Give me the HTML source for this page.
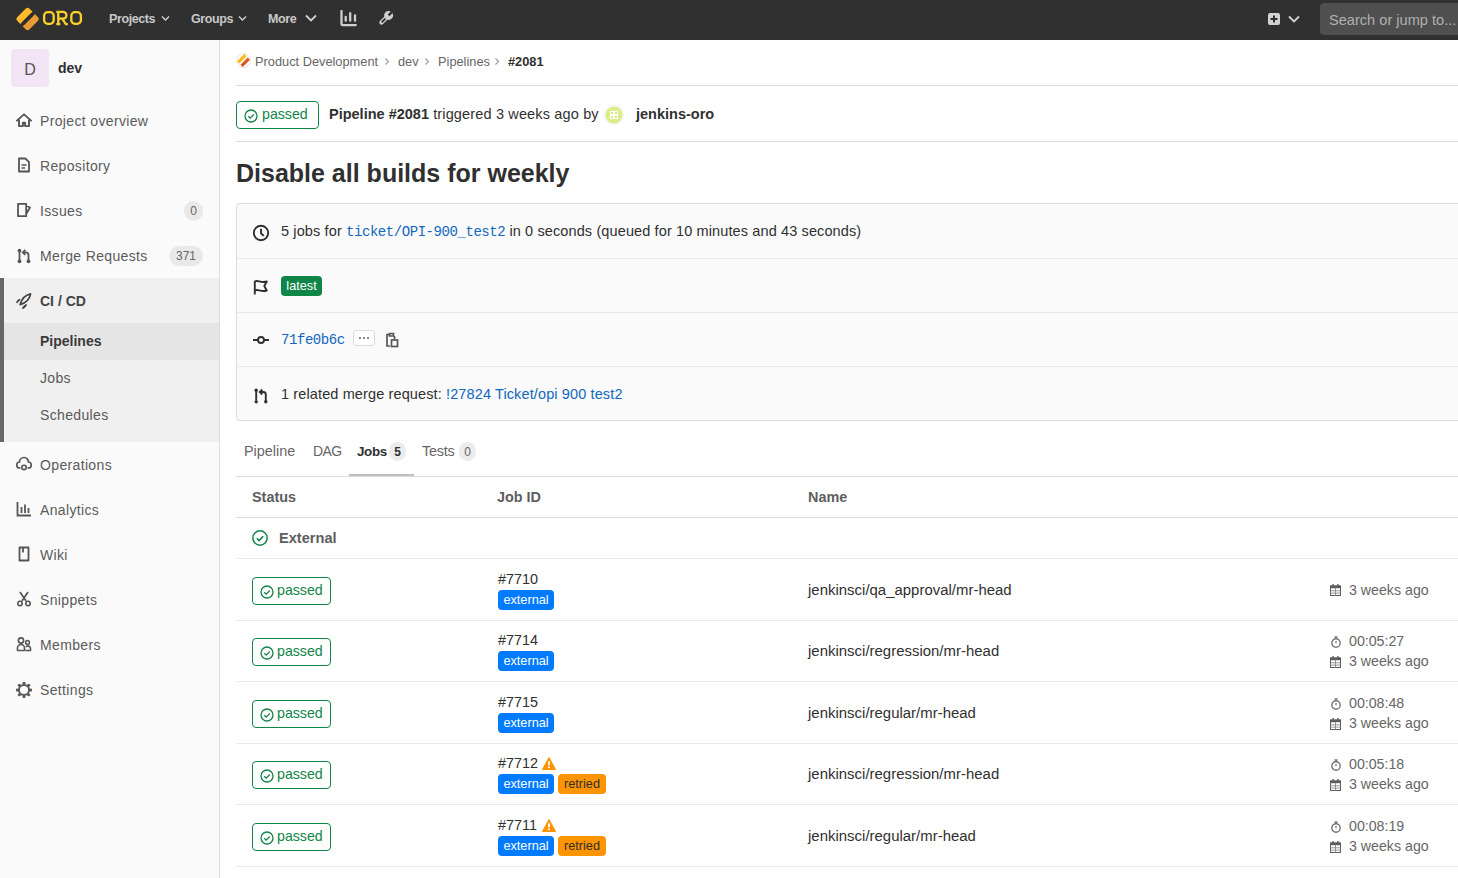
<!DOCTYPE html>
<html><head><meta charset="utf-8">
<style>
*{box-sizing:border-box;margin:0;padding:0}
html,body{width:1458px;height:878px;overflow:hidden;background:#fff;font-family:"Liberation Sans",sans-serif;color:#303030}
.a{position:absolute;white-space:nowrap}
#hdr{position:absolute;left:0;top:0;width:1458px;height:40px;background:#303030}
.nav{position:absolute;top:10px;font-size:12.5px;letter-spacing:-0.4px;font-weight:bold;color:#c8c8c8;line-height:18px}
#side{position:absolute;left:0;top:40px;width:220px;height:838px;background:#fafafa;border-right:1px solid #dcdcdc}
.si{position:absolute;left:0;width:219px;height:45px}
.si .t{position:absolute;left:40px;top:14px;font-size:14px;letter-spacing:0.35px;line-height:19px;color:#5a5a5a}
.si svg{position:absolute;left:16px;top:14px}
.cnt{position:absolute;right:16px;top:13px;height:20px;border-radius:10px;background:#e9e9e9;color:#666;font-size:12px;line-height:20px;text-align:center;padding:0 7px}

.bc{position:absolute;top:53px;font-size:12.8px;line-height:18px;color:#666}
.hl{position:absolute;left:236px;width:1222px;height:1px;background:#dbdbdb}
.ci{position:absolute;border:1px solid #108548;border-radius:4px;color:#108548}
.ci svg{position:absolute}
.ci span{position:absolute;font-size:14.2px;line-height:18px}
.ir{position:absolute;left:281px;font-size:14.5px;letter-spacing:0.12px;line-height:19px;color:#303030}
.mono{font-family:"Liberation Mono",monospace;font-size:14px;letter-spacing:-0.44px;color:#1068bf}
.lnk{color:#1068bf}
.bdg{position:absolute;height:20px;border-radius:4px;font-size:12.7px;line-height:20px;text-align:center}
.th{position:absolute;top:488px;font-size:14.4px;font-weight:bold;color:#5e5e5e;line-height:19px}
.rl{position:absolute;left:236px;width:1222px;height:1px;background:#e9e9e9}
.jid{position:absolute;left:498px;font-size:14.4px;line-height:19px;color:#303030}
.jn{position:absolute;left:808px;font-size:14.9px;letter-spacing:0.03px;line-height:19px;color:#303030}
.tm{position:absolute;left:1349px;font-size:14.2px;line-height:19px;color:#666}
#main{position:absolute;left:220px;top:40px;width:1238px;height:838px}
</style></head><body>
<div id="hdr">
  <!-- logo -->
  <svg class="a" style="left:14px;top:5px" width="28" height="28" viewBox="0 0 28 28">
    <g transform="rotate(-45 13.6 14)">
      <clipPath id="lc"><rect x="5" y="5.4" width="17.2" height="17.2" rx="2.8"/></clipPath>
      <g clip-path="url(#lc)">
        <rect x="0" y="0" width="28" height="12.4" fill="#fbbb2b"/>
        <rect x="0" y="15.7" width="28" height="13" fill="#e89a33"/>
      </g>
      <rect x="5.6" y="12.3" width="16" height="3.5" rx="1.7" fill="#2d2d2d"/>
    </g>
  </svg>
  <svg class="a" style="left:42px;top:10px" width="42" height="16" viewBox="0 0 42 16">
    <rect x="2.1" y="2.2" width="9.6" height="11.6" rx="3.6" stroke="#fcd02a" stroke-width="2.3" fill="none"/>
    <path d="M14.3 1.9h6.2c2.6 0 3.9 1.4 3.9 3.4s-1.3 3.4-3.9 3.4h-4.5M16.3 1.9v12.2M14.3 14.1h4M20.2 8.7l3.6 5.4h2" stroke="#fcd02a" stroke-width="2.3" fill="none"/>
    <rect x="29.3" y="2.2" width="9.6" height="11.6" rx="3.6" stroke="#fcd02a" stroke-width="2.3" fill="none"/>
  </svg>
  <div class="nav" style="left:109px">Projects</div>
  <svg class="a" style="left:161px;top:15px" width="9" height="7" viewBox="0 0 9 7"><path d="M1 1.5l3.5 3.5 3.5-3.5" stroke="#d2d2d2" stroke-width="1.4" fill="none"/></svg>
  <div class="nav" style="left:191px">Groups</div>
  <svg class="a" style="left:238px;top:15px" width="9" height="7" viewBox="0 0 9 7"><path d="M1 1.5l3.5 3.5 3.5-3.5" stroke="#d2d2d2" stroke-width="1.4" fill="none"/></svg>
  <div class="nav" style="left:268px">More</div>
  <svg class="a" style="left:305px;top:14px" width="12" height="9" viewBox="0 0 12 9"><path d="M1 1.5l5 5 5-5" stroke="#d2d2d2" stroke-width="1.8" fill="none"/></svg>
  <svg class="a" style="left:340px;top:10px" width="17" height="17" viewBox="0 0 17 17"><path d="M1.5 1V14c0 .8.4 1.1 1.1 1.1H15.8" stroke="#cfcfcf" stroke-width="2.3" fill="none" stroke-linecap="round"/><path d="M5.7 6.8v3.9M10.2 3.2v7.5M15 5.4v5.3" stroke="#cfcfcf" stroke-width="2.3" stroke-linecap="round"/></svg>
  <svg class="a" style="left:378px;top:10px" width="16" height="16" viewBox="0 0 16 16"><defs><mask id="wm" maskUnits="userSpaceOnUse" x="-8" y="-8" width="32" height="32"><rect x="-8" y="-8" width="32" height="32" fill="#fff"/><rect x="6.75" y="-2" width="2.5" height="6.4" fill="#000"/><rect x="7.1" y="8.6" width="1.8" height="5.6" rx="0.9" fill="#000"/></mask></defs><g transform="rotate(45 8 8)"><g mask="url(#wm)" fill="#cfcfcf"><circle cx="8" cy="4.3" r="4.5"/><rect x="5.8" y="5" width="4.4" height="11.6" rx="2.2"/></g></g></svg>
  <svg class="a" style="left:1268px;top:13px" width="12" height="12" viewBox="0 0 12 12"><rect x="0" y="0" width="12" height="12" rx="2" fill="#d2d2d2"/><path d="M6 2.5v7M2.5 6h7" stroke="#303030" stroke-width="2"/></svg>
  <svg class="a" style="left:1288px;top:15px" width="12" height="8" viewBox="0 0 12 8"><path d="M1 1.5l5 5 5-5" stroke="#d2d2d2" stroke-width="1.8" fill="none"/></svg>
  <div class="a" style="left:1320px;top:3px;width:160px;height:32px;border-radius:4px;background:#4f4f4f"></div>
  <div class="a" style="left:1329px;top:11px;font-size:14.6px;line-height:19px;color:#b0b0b0">Search or jump to...</div>
</div>

<div id="side">
  <div class="a" style="left:11px;top:9px;width:38px;height:38px;border-radius:4px;background:#f3e5f5;color:#555;font-size:16px;line-height:42px;text-align:center">D</div>
  <div class="a" style="left:58px;top:19px;font-size:14px;font-weight:bold;color:#303030;line-height:19px">dev</div>

  <div class="si" style="top:58px"><svg width="16" height="16" viewBox="0 0 16 16"><path d="M0.9 8.6L8 2.4l7.1 6.2" stroke="#555" stroke-width="1.9" fill="none" stroke-linejoin="round" stroke-linecap="round"/><path d="M3 7.6V14.1h3.9v-3.4h2.2v3.4H13V7.6" stroke="#555" stroke-width="1.9" fill="none" stroke-linejoin="round"/></svg><span class="t">Project overview</span></div>
  <div class="si" style="top:103px"><svg width="16" height="16" viewBox="0 0 16 16"><path d="M3 1.5h6.5l3.5 3.6V14.5H3z" stroke="#555" stroke-width="1.8" fill="none" stroke-linejoin="round"/><path d="M5.5 8h5M5.5 11h3.5" stroke="#555" stroke-width="1.6"/></svg><span class="t">Repository</span></div>
  <div class="si" style="top:148px"><svg width="16" height="16" viewBox="0 0 16 16"><path d="M2 1.8h8.2v12.4H2zM10.2 3.5l3.8 2-3.8 6.5" stroke="#555" stroke-width="1.8" fill="none" stroke-linejoin="round"/></svg><span class="t">Issues</span><span class="cnt" style="right:16px;padding:0 6px">0</span></div>
  <div class="si" style="top:193px"><svg width="16" height="16" viewBox="0 0 16 16" style="top:15px"><path d="M3.5 3v9.5M12.5 13V7c0-1.6-1-2.6-2.6-2.6H7.6" stroke="#555" stroke-width="1.8" fill="none"/><path d="M9.3 1.8L6.8 4.4l2.5 2.5" stroke="#555" stroke-width="1.8" fill="none"/><circle cx="3.5" cy="2.6" r="1.9" fill="#555"/><circle cx="3.5" cy="13.3" r="1.9" fill="#555"/><circle cx="12.5" cy="13.3" r="1.9" fill="#555"/></svg><span class="t">Merge Requests</span><span class="cnt" style="right:16px">371</span></div>
  <div class="a" style="left:0;top:238px;width:219px;height:164px;background:#f0f0f0;border-left:4px solid #666"></div>
  <div class="a" style="left:4px;top:283px;width:215px;height:37px;background:#e5e5e5"></div>
  <div class="si" style="top:238px"><svg width="16" height="16" viewBox="0 0 16 16" style="top:15px"><path d="M4.1 11.6C5.4 6.8 8.6 2.2 14.6 0.9 13.6 6.6 9.4 10.2 4.1 11.6z" stroke="#444" stroke-width="1.7" fill="none" stroke-linejoin="round"/><path d="M0.6 9.8C0.9 8.1 1.9 6.7 3.9 6.1 3.5 7.8 2.5 9.2 0.6 9.8z" fill="#444" stroke="#444" stroke-width="0.9" stroke-linejoin="round"/><path d="M6.4 15.6C6.8 13.6 8.2 12.2 10.6 11.5 10.1 13.6 8.7 15.1 6.4 15.6z" fill="#444" stroke="#444" stroke-width="0.9" stroke-linejoin="round"/></svg><span class="t" style="font-weight:bold;color:#444;letter-spacing:0">CI / CD</span></div>
  <div class="a" style="left:40px;top:292px;font-size:14px;font-weight:bold;color:#3a3a3a;line-height:19px">Pipelines</div>
  <div class="a" style="left:40px;top:329px;font-size:14px;letter-spacing:0.35px;color:#5a5a5a;line-height:19px">Jobs</div>
  <div class="a" style="left:40px;top:366px;font-size:14px;letter-spacing:0.35px;color:#5a5a5a;line-height:19px">Schedules</div>
  <div class="si" style="top:402px"><svg width="16" height="16" viewBox="0 0 16 16"><path d="M4.5 12H4a3 3 0 0 1-.5-6 4.5 4.5 0 0 1 9 0 3 3 0 0 1-.5 6h-.5" stroke="#555" stroke-width="1.7" fill="none"/><circle cx="8" cy="11.5" r="2.2" stroke="#555" stroke-width="1.6" fill="none"/></svg><span class="t">Operations</span></div>
  <div class="si" style="top:447px"><svg width="16" height="16" viewBox="0 0 16 16"><path d="M1.5 1v13.5H15" stroke="#555" stroke-width="1.8" fill="none"/><path d="M5.5 6v6M9 3.5V12M12.5 7v5" stroke="#555" stroke-width="1.8"/></svg><span class="t">Analytics</span></div>
  <div class="si" style="top:492px"><svg width="16" height="16" viewBox="0 0 16 16"><path d="M3.5 1.5h9v13h-9zM7 1.5v5" stroke="#555" stroke-width="1.8" fill="none" stroke-linejoin="round"/></svg><span class="t">Wiki</span></div>
  <div class="si" style="top:537px"><svg width="16" height="16" viewBox="0 0 16 16"><path d="M4 1l6 9M12 1L6 10" stroke="#555" stroke-width="1.7" fill="none"/><circle cx="4" cy="12.5" r="2.2" stroke="#555" stroke-width="1.6" fill="none"/><circle cx="12" cy="12.5" r="2.2" stroke="#555" stroke-width="1.6" fill="none"/></svg><span class="t">Snippets</span></div>
  <div class="si" style="top:582px"><svg width="16" height="16" viewBox="0 0 16 16"><circle cx="5" cy="4.5" r="2.6" stroke="#555" stroke-width="1.6" fill="none"/><circle cx="11.5" cy="6.5" r="1.9" stroke="#555" stroke-width="1.5" fill="none"/><path d="M1.5 14.5v-2.5a3.5 3.5 0 0 1 7 0v2.5zM9.5 14.5H14.5v-2a2.5 2.5 0 0 0-4.5-1.5" stroke="#555" stroke-width="1.6" fill="none" stroke-linejoin="round"/></svg><span class="t">Members</span></div>
  <div class="si" style="top:627px"><svg width="16" height="16" viewBox="0 0 16 16" style="top:14.5px"><g fill="#595959"><circle cx="8" cy="8" r="6.1"/><circle cx="8" cy="1.3" r="1.5"/><circle cx="8" cy="14.7" r="1.5"/><circle cx="1.3" cy="8" r="1.5"/><circle cx="14.7" cy="8" r="1.5"/><circle cx="3.3" cy="3.3" r="1.5"/><circle cx="12.7" cy="3.3" r="1.5"/><circle cx="3.3" cy="12.7" r="1.5"/><circle cx="12.7" cy="12.7" r="1.5"/></g><circle cx="8" cy="8" r="4.1" fill="#fafafa"/></svg><span class="t">Settings</span></div>
</div>


<!-- breadcrumb -->
<svg class="a" style="left:236px;top:53px" width="15" height="15" viewBox="0 0 15 15"><circle cx="7.5" cy="7.5" r="7" fill="#fff" stroke="#e3e3e8" stroke-width="1"/><g transform="rotate(-45 7.5 7.5)"><rect x="2.3" y="3.4" width="10.4" height="3.3" rx="0.8" fill="#fdb913"/><rect x="2.3" y="8.3" width="10.4" height="3.3" rx="0.8" fill="#d75a1f"/></g></svg>
<div class="bc" style="left:255px">Product Development</div>
<svg class="a" style="left:384px;top:57px" width="6" height="9" viewBox="0 0 6 9"><path d="M1.5 1.5l3 3-3 3" stroke="#999" stroke-width="1.1" fill="none"/></svg>
<div class="bc" style="left:398px">dev</div>
<svg class="a" style="left:424px;top:57px" width="6" height="9" viewBox="0 0 6 9"><path d="M1.5 1.5l3 3-3 3" stroke="#999" stroke-width="1.1" fill="none"/></svg>
<div class="bc" style="left:438px">Pipelines</div>
<svg class="a" style="left:494px;top:57px" width="6" height="9" viewBox="0 0 6 9"><path d="M1.5 1.5l3 3-3 3" stroke="#999" stroke-width="1.1" fill="none"/></svg>
<div class="bc" style="left:508px;font-weight:bold;color:#303030">#2081</div>
<div class="hl" style="top:85px"></div>

<!-- pipeline header -->
<div class="ci" style="left:236px;top:101px;width:83px;height:28px">
  <svg style="left:7px;top:7px" width="14" height="14" viewBox="0 0 14 14"><circle cx="7" cy="7" r="6" stroke="#108548" stroke-width="1.3" fill="none"/><path d="M4.3 7.2l1.9 1.9 3.6-3.6" stroke="#108548" stroke-width="1.3" fill="none"/></svg>
  <span style="left:25px;top:3px">passed</span>
</div>
<div class="a" style="left:329px;top:105px;font-size:14.5px;line-height:19px;color:#303030"><b>Pipeline #2081</b><span style="letter-spacing:0.15px"> triggered 3 weeks ago by</span></div>
<svg class="a" style="left:604px;top:105px" width="20" height="20" viewBox="0 0 20 20"><circle cx="10" cy="10" r="9.5" fill="#fff" stroke="#e6e6f0" stroke-width="0.6"/><circle cx="10" cy="10" r="8.6" fill="#d9ee86"/><rect x="6" y="6" width="8" height="8" fill="#fff"/><g fill="#c5e33f"><circle cx="8" cy="8" r="1"/><circle cx="12" cy="8" r="1"/><circle cx="8" cy="12" r="1"/><circle cx="12" cy="12" r="1"/></g></svg>
<div class="a" style="left:636px;top:105px;font-size:14.5px;line-height:19px;font-weight:bold;color:#303030">jenkins-oro</div>
<div class="hl" style="top:141px"></div>

<!-- title -->
<div class="a" style="left:236px;top:158px;font-size:25px;line-height:30px;font-weight:bold;color:#303030">Disable all builds for weekly</div>

<!-- info box -->
<div class="a" style="left:236px;top:203px;width:1240px;height:218px;background:#fafafa;border:1px solid #dbdbdb;border-radius:4px"></div>
<div class="a" style="left:237px;top:258px;width:1221px;height:1px;background:#e9e9e9"></div>
<div class="a" style="left:237px;top:312px;width:1221px;height:1px;background:#e9e9e9"></div>
<div class="a" style="left:237px;top:366px;width:1221px;height:1px;background:#e9e9e9"></div>

<svg class="a" style="left:252px;top:224px" width="18" height="18" viewBox="0 0 18 18"><circle cx="9" cy="9" r="7.2" stroke="#303030" stroke-width="1.9" fill="none"/><path d="M9 4.8V9.3l2.8 2.6" stroke="#303030" stroke-width="1.9" fill="none"/></svg>
<div class="ir" style="top:222px">5 jobs for <span class="mono">ticket/OPI-900_test2</span> in 0 seconds (queued for 10 minutes and 43 seconds)</div>

<svg class="a" style="left:253px;top:279px" width="16" height="16" viewBox="0 0 16 16"><path d="M1.8 15.5V2.5c3-1.8 6 1.8 12 0l-2.5 4.5 2.5 4.5c-6 1.8-9-1.8-12 0" stroke="#303030" stroke-width="1.9" fill="none" stroke-linejoin="round"/></svg>
<div class="bdg" style="left:281px;top:276px;width:41px;background:#108548;color:#fff">latest</div>

<svg class="a" style="left:253px;top:332px" width="16" height="16" viewBox="0 0 16 16"><circle cx="8" cy="8" r="3" stroke="#303030" stroke-width="1.9" fill="none"/><path d="M0 8h5M11 8h5" stroke="#303030" stroke-width="1.9"/></svg>
<div class="ir mono" style="top:331px">71fe0b6c</div>
<div class="a" style="left:353px;top:330px;width:22px;height:16px;background:#fff;border:1px solid #dbdbdb;border-radius:3px"></div>
<svg class="a" style="left:357px;top:336px" width="14" height="4" viewBox="0 0 14 4"><circle cx="3" cy="2" r="1.05" fill="#666"/><circle cx="7" cy="2" r="1.05" fill="#666"/><circle cx="11" cy="2" r="1.05" fill="#666"/></svg>
<svg class="a" style="left:385px;top:332px" width="14" height="16" viewBox="0 0 14 16"><path d="M4.5 2.5H2v11.5h3M4.5 1.5h4v2.5h-4z" stroke="#555" stroke-width="1.7" fill="none"/><path d="M9.5 4v3" stroke="#555" stroke-width="1.7"/><rect x="6.5" y="8" width="6" height="6.5" stroke="#555" stroke-width="1.7" fill="none"/></svg>

<svg class="a" style="left:253px;top:388px" width="16" height="16" viewBox="0 0 16 16"><path d="M3.2 3v9M12.8 13V6.5c0-1.5-1-2.5-2.5-2.5H7.5" stroke="#303030" stroke-width="1.9" fill="none"/><path d="M9.3 1.5L6.8 4l2.5 2.5" stroke="#303030" stroke-width="1.9" fill="none"/><circle cx="3.2" cy="2.3" r="1.7" fill="#303030"/><circle cx="3.2" cy="13.7" r="1.7" fill="#303030"/><circle cx="12.8" cy="13.7" r="1.7" fill="#303030"/></svg>
<div class="ir" style="top:385px">1 related merge request: <span class="lnk">!27824 Ticket/opi 900 test2</span></div>

<!-- tabs -->
<div class="a" style="left:244px;top:442px;font-size:14.4px;line-height:19px;color:#666">Pipeline</div>
<div class="a" style="left:313px;top:442px;font-size:14px;letter-spacing:-0.6px;line-height:19px;color:#666">DAG</div>
<div class="a" style="left:357px;top:442px;font-size:13.4px;letter-spacing:-0.35px;line-height:19px;font-weight:bold;color:#303030">Jobs</div>
<div class="a" style="left:389px;top:442px;width:17px;height:19px;border-radius:9px;background:#ececec;font-size:12px;line-height:21px;text-align:center;font-weight:bold;color:#303030">5</div>
<div class="a" style="left:422px;top:442px;font-size:14.4px;letter-spacing:-0.2px;line-height:19px;color:#666">Tests</div>
<div class="a" style="left:459px;top:442px;width:17px;height:19px;border-radius:9px;background:#ececec;font-size:12px;line-height:21px;text-align:center;color:#666">0</div>
<div class="hl" style="top:476px"></div>
<div class="a" style="left:349px;top:474px;width:65px;height:2px;background:#bfbfbf"></div>

<!-- table -->
<div class="th" style="left:252px">Status</div>
<div class="th" style="left:497px">Job ID</div>
<div class="th" style="left:808px">Name</div>
<div class="hl" style="top:517px"></div>
<svg class="a" style="left:252px;top:530px" width="16" height="16" viewBox="0 0 16 16"><circle cx="8" cy="8" r="7.2" stroke="#108548" stroke-width="1.5" fill="none"/><path d="M4.8 8.3l2.2 2.2 4.2-4.2" stroke="#108548" stroke-width="1.6" fill="none"/></svg>
<div class="a" style="left:279px;top:529px;font-size:14.6px;line-height:19px;font-weight:bold;color:#5e5e5e">External</div>
<div class="rl" style="top:558px"></div>
<div class="ci" style="left:252px;top:577px;width:79px;height:28px">
  <svg style="left:7px;top:7px" width="14" height="14" viewBox="0 0 14 14"><circle cx="7" cy="7" r="6" stroke="#108548" stroke-width="1.3" fill="none"/><path d="M4.3 7.2l1.9 1.9 3.6-3.6" stroke="#108548" stroke-width="1.3" fill="none"/></svg>
  <span style="left:24px;top:3px">passed</span>
</div>
<div class="jid" style="top:570px">#7710</div>
<div class="bdg" style="left:498px;top:590px;width:56px;background:#007bff;color:#fff">external</div>
<div class="jn" style="top:581px">jenkinsci/qa_approval/mr-head</div>
<svg class="a" style="left:1330px;top:584px" width="11" height="12" viewBox="0 0 11 12"><rect x="0.5" y="2" width="10" height="9.5" stroke="#5c5c5c" stroke-width="1" fill="#fff"/><rect x="0" y="1.6" width="11" height="2.6" fill="#5c5c5c"/><rect x="2.4" y="0" width="1.4" height="2.5" fill="#5c5c5c"/><rect x="7.2" y="0" width="1.4" height="2.5" fill="#5c5c5c"/><path d="M5.5 4v7.5M0.5 6.8h10M0.5 9.1h10" stroke="#8a8a8a" stroke-width="0.9"/></svg>
<div class="tm" style="top:581px">3 weeks ago</div>
<div class="rl" style="top:620px"></div>
<div class="ci" style="left:252px;top:638px;width:79px;height:28px">
  <svg style="left:7px;top:7px" width="14" height="14" viewBox="0 0 14 14"><circle cx="7" cy="7" r="6" stroke="#108548" stroke-width="1.3" fill="none"/><path d="M4.3 7.2l1.9 1.9 3.6-3.6" stroke="#108548" stroke-width="1.3" fill="none"/></svg>
  <span style="left:24px;top:3px">passed</span>
</div>
<div class="jid" style="top:631px">#7714</div>
<div class="bdg" style="left:498px;top:651px;width:56px;background:#007bff;color:#fff">external</div>
<div class="jn" style="top:642px">jenkinsci/regression/mr-head</div>
<svg class="a" style="left:1330px;top:636px" width="12" height="12" viewBox="0 0 12 12"><circle cx="6" cy="7" r="4.2" stroke="#777" stroke-width="1.4" fill="none"/><path d="M4.5 1h3M6 1v2M6 5v2.2" stroke="#777" stroke-width="1.3"/></svg>
<div class="tm" style="top:632px">00:05:27</div>
<svg class="a" style="left:1330px;top:656px" width="11" height="12" viewBox="0 0 11 12"><rect x="0.5" y="2" width="10" height="9.5" stroke="#5c5c5c" stroke-width="1" fill="#fff"/><rect x="0" y="1.6" width="11" height="2.6" fill="#5c5c5c"/><rect x="2.4" y="0" width="1.4" height="2.5" fill="#5c5c5c"/><rect x="7.2" y="0" width="1.4" height="2.5" fill="#5c5c5c"/><path d="M5.5 4v7.5M0.5 6.8h10M0.5 9.1h10" stroke="#8a8a8a" stroke-width="0.9"/></svg>
<div class="tm" style="top:652px">3 weeks ago</div>
<div class="rl" style="top:681px"></div>
<div class="ci" style="left:252px;top:700px;width:79px;height:28px">
  <svg style="left:7px;top:7px" width="14" height="14" viewBox="0 0 14 14"><circle cx="7" cy="7" r="6" stroke="#108548" stroke-width="1.3" fill="none"/><path d="M4.3 7.2l1.9 1.9 3.6-3.6" stroke="#108548" stroke-width="1.3" fill="none"/></svg>
  <span style="left:24px;top:3px">passed</span>
</div>
<div class="jid" style="top:693px">#7715</div>
<div class="bdg" style="left:498px;top:713px;width:56px;background:#007bff;color:#fff">external</div>
<div class="jn" style="top:704px">jenkinsci/regular/mr-head</div>
<svg class="a" style="left:1330px;top:698px" width="12" height="12" viewBox="0 0 12 12"><circle cx="6" cy="7" r="4.2" stroke="#777" stroke-width="1.4" fill="none"/><path d="M4.5 1h3M6 1v2M6 5v2.2" stroke="#777" stroke-width="1.3"/></svg>
<div class="tm" style="top:694px">00:08:48</div>
<svg class="a" style="left:1330px;top:718px" width="11" height="12" viewBox="0 0 11 12"><rect x="0.5" y="2" width="10" height="9.5" stroke="#5c5c5c" stroke-width="1" fill="#fff"/><rect x="0" y="1.6" width="11" height="2.6" fill="#5c5c5c"/><rect x="2.4" y="0" width="1.4" height="2.5" fill="#5c5c5c"/><rect x="7.2" y="0" width="1.4" height="2.5" fill="#5c5c5c"/><path d="M5.5 4v7.5M0.5 6.8h10M0.5 9.1h10" stroke="#8a8a8a" stroke-width="0.9"/></svg>
<div class="tm" style="top:714px">3 weeks ago</div>
<div class="rl" style="top:743px"></div>
<div class="ci" style="left:252px;top:761px;width:79px;height:28px">
  <svg style="left:7px;top:7px" width="14" height="14" viewBox="0 0 14 14"><circle cx="7" cy="7" r="6" stroke="#108548" stroke-width="1.3" fill="none"/><path d="M4.3 7.2l1.9 1.9 3.6-3.6" stroke="#108548" stroke-width="1.3" fill="none"/></svg>
  <span style="left:24px;top:3px">passed</span>
</div>
<div class="jid" style="top:754px">#7712</div>
<div class="bdg" style="left:498px;top:774px;width:56px;background:#007bff;color:#fff">external</div>
<svg class="a" style="left:542px;top:757px" width="14" height="13" viewBox="0 0 14 13"><path d="M7 .5L13.6 12.5H.4z" fill="#fc9403" stroke="#fc9403" stroke-width="1" stroke-linejoin="round"/><path d="M7 4.3v4" stroke="#fff" stroke-width="1.8"/><circle cx="7" cy="10.3" r="1" fill="#fff"/></svg>
<div class="bdg" style="left:558px;top:774px;width:48px;background:#fc9403;color:#303030">retried</div>
<div class="jn" style="top:765px">jenkinsci/regression/mr-head</div>
<svg class="a" style="left:1330px;top:759px" width="12" height="12" viewBox="0 0 12 12"><circle cx="6" cy="7" r="4.2" stroke="#777" stroke-width="1.4" fill="none"/><path d="M4.5 1h3M6 1v2M6 5v2.2" stroke="#777" stroke-width="1.3"/></svg>
<div class="tm" style="top:755px">00:05:18</div>
<svg class="a" style="left:1330px;top:779px" width="11" height="12" viewBox="0 0 11 12"><rect x="0.5" y="2" width="10" height="9.5" stroke="#5c5c5c" stroke-width="1" fill="#fff"/><rect x="0" y="1.6" width="11" height="2.6" fill="#5c5c5c"/><rect x="2.4" y="0" width="1.4" height="2.5" fill="#5c5c5c"/><rect x="7.2" y="0" width="1.4" height="2.5" fill="#5c5c5c"/><path d="M5.5 4v7.5M0.5 6.8h10M0.5 9.1h10" stroke="#8a8a8a" stroke-width="0.9"/></svg>
<div class="tm" style="top:775px">3 weeks ago</div>
<div class="rl" style="top:804px"></div>
<div class="ci" style="left:252px;top:823px;width:79px;height:28px">
  <svg style="left:7px;top:7px" width="14" height="14" viewBox="0 0 14 14"><circle cx="7" cy="7" r="6" stroke="#108548" stroke-width="1.3" fill="none"/><path d="M4.3 7.2l1.9 1.9 3.6-3.6" stroke="#108548" stroke-width="1.3" fill="none"/></svg>
  <span style="left:24px;top:3px">passed</span>
</div>
<div class="jid" style="top:816px">#7711</div>
<div class="bdg" style="left:498px;top:836px;width:56px;background:#007bff;color:#fff">external</div>
<svg class="a" style="left:542px;top:819px" width="14" height="13" viewBox="0 0 14 13"><path d="M7 .5L13.6 12.5H.4z" fill="#fc9403" stroke="#fc9403" stroke-width="1" stroke-linejoin="round"/><path d="M7 4.3v4" stroke="#fff" stroke-width="1.8"/><circle cx="7" cy="10.3" r="1" fill="#fff"/></svg>
<div class="bdg" style="left:558px;top:836px;width:48px;background:#fc9403;color:#303030">retried</div>
<div class="jn" style="top:827px">jenkinsci/regular/mr-head</div>
<svg class="a" style="left:1330px;top:821px" width="12" height="12" viewBox="0 0 12 12"><circle cx="6" cy="7" r="4.2" stroke="#777" stroke-width="1.4" fill="none"/><path d="M4.5 1h3M6 1v2M6 5v2.2" stroke="#777" stroke-width="1.3"/></svg>
<div class="tm" style="top:817px">00:08:19</div>
<svg class="a" style="left:1330px;top:841px" width="11" height="12" viewBox="0 0 11 12"><rect x="0.5" y="2" width="10" height="9.5" stroke="#5c5c5c" stroke-width="1" fill="#fff"/><rect x="0" y="1.6" width="11" height="2.6" fill="#5c5c5c"/><rect x="2.4" y="0" width="1.4" height="2.5" fill="#5c5c5c"/><rect x="7.2" y="0" width="1.4" height="2.5" fill="#5c5c5c"/><path d="M5.5 4v7.5M0.5 6.8h10M0.5 9.1h10" stroke="#8a8a8a" stroke-width="0.9"/></svg>
<div class="tm" style="top:837px">3 weeks ago</div>
<div class="rl" style="top:866px"></div>
</body></html>
